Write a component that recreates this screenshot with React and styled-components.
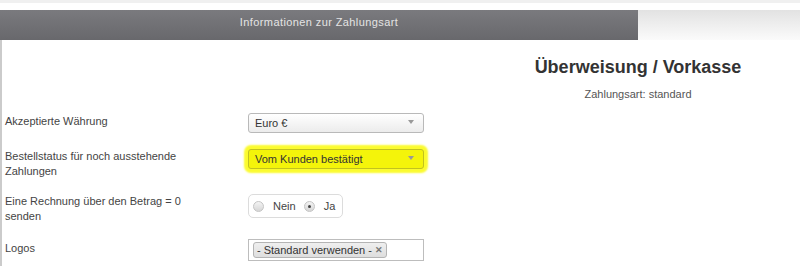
import * as React from 'react';
import styled, { createGlobalStyle, css } from 'styled-components';

const GlobalStyle = createGlobalStyle`
  html, body {
    margin: 0;
    padding: 0;
    background: #fff;
    overflow: hidden;
  }
  body {
    font-family: "Liberation Sans", Arial, sans-serif;
    font-size: 11px;
    color: #444;
  }
`;

const TopStrip = styled.div`
  height: 3px;
  background: #f0f0f0;
  margin-bottom: 7px;
`;

const Tabs = styled.div`
  display: flex;
  height: 30px;
`;

const ActiveTab = styled.div`
  width: 638px;
  display: flex;
  align-items: center;
  justify-content: center;
  background: linear-gradient(#7a7a7e, #68686c);
  color: #e4e4e4;
  font-size: 11px;
  letter-spacing: 0.4px;
  padding-bottom: 6px;
  box-sizing: border-box;
`;

const IdleTab = styled.div`
  flex: 1;
  background: linear-gradient(#e2e2e2, #fbfbfb);
`;

const Panel = styled.div`
  border-left: 2px solid #cbcbcb;
  padding-top: 16px;
  height: 226px;
  box-sizing: border-box;
`;

const Head = styled.div`
  display: grid;
  grid-template-columns: 474px 1fr;
  margin-bottom: 12px;
`;

const HeadText = styled.div`
  grid-column: 2;
  text-align: center;
`;

const Title = styled.h2`
  margin: 0 0 9px;
  font-size: 18px;
  line-height: 22px;
  font-weight: bold;
  color: #333;
`;

const Subtitle = styled.div`
  font-size: 11px;
  line-height: 14px;
  color: #555;
`;

const Row = styled.div`
  display: grid;
  grid-template-columns: 246px 1fr;
  margin-bottom: ${p => p.gap ?? 16}px;
`;

const Label = styled.div`
  padding-left: 3px;
  width: 180px;
  line-height: 15px;
  color: #444;
  padding-top: ${p => p.offset ?? 0}px;
`;

const Select = styled.div`
  position: relative;
  width: 176px;
  height: 20px;
  box-sizing: border-box;
  border: 1px solid #b9b9b9;
  border-radius: 3px;
  background: linear-gradient(#ffffff, #ececec);
  display: flex;
  align-items: center;
  padding-left: 6px;
  color: #333;

  ${p => p.marked && css`
    background: #f4f40a;
    border-color: #c2c21e;
    box-shadow: 0 0 2px 4px #fbfb2e;
  `}
`;

const Arrow = styled.span`
  position: absolute;
  right: 9px;
  top: 6px;
  width: 0;
  height: 0;
  border-left: 3px solid transparent;
  border-right: 3px solid transparent;
  border-top: 4px solid #999;
`;

const RadioGroup = styled.div`
  display: inline-flex;
  align-items: center;
  height: 24px;
  width: 95px;
  box-sizing: border-box;
  border: 1px solid #dcdcdc;
  border-radius: 5px;
  padding-left: 4px;
  color: #444;
`;

const Radio = styled.span`
  width: 9px;
  height: 9px;
  border-radius: 50%;
  border: 1px solid #c4c4c4;
  background: linear-gradient(#f4f4f4, #d6d6d6);
  display: inline-flex;
  align-items: center;
  justify-content: center;
  margin-right: ${p => p.space}px;

  ${p => p.checked && css`
    &::after {
      content: '';
      width: 3px;
      height: 3px;
      border-radius: 50%;
      background: #444;
    }
  `}
`;

const RadioText = styled.span`
  margin-right: ${p => p.space}px;
`;

const TagField = styled.div`
  width: 176px;
  height: 22px;
  box-sizing: border-box;
  border: 1px solid #bdbdbd;
  display: flex;
  align-items: center;
  padding-left: 4px;
`;

const Tag = styled.span`
  display: inline-flex;
  align-items: center;
  height: 16px;
  box-sizing: border-box;
  padding: 0 3px 0 3px;
  border: 1px solid #b4b4b4;
  border-radius: 3px;
  background: linear-gradient(#efefef, #dedede);
  color: #333;
`;

const TagClose = styled.span`
  margin-left: 3px;
  color: #777;
  font-weight: bold;
  font-size: 9px;
`;

export default function App() {
  return (
    <>
      <GlobalStyle />
      <TopStrip />
      <Tabs>
        <ActiveTab>Informationen zur Zahlungsart</ActiveTab>
        <IdleTab />
      </Tabs>
      <Panel>
        <Head>
          <HeadText>
            <Title>Überweisung / Vorkasse</Title>
            <Subtitle>Zahlungsart: standard</Subtitle>
          </HeadText>
        </Head>

        <Row>
          <Label offset={1}>Akzeptierte Währung</Label>
          <div>
            <Select>Euro €<Arrow /></Select>
          </div>
        </Row>

        <Row gap={15}>
          <Label>Bestellstatus für noch ausstehende Zahlungen</Label>
          <div>
            <Select marked>Vom Kunden bestätigt<Arrow /></Select>
          </div>
        </Row>

        <Row gap={15}>
          <Label>Eine Rechnung über den Betrag = 0 senden</Label>
          <div>
            <RadioGroup>
              <Radio space={9} />
              <RadioText space={8}>Nein</RadioText>
              <Radio checked space={9} />
              <RadioText space={0}>Ja</RadioText>
            </RadioGroup>
          </div>
        </Row>

        <Row>
          <Label offset={2}>Logos</Label>
          <div>
            <TagField>
              <Tag>- Standard verwenden -<TagClose>✕</TagClose></Tag>
            </TagField>
          </div>
        </Row>
      </Panel>
    </>
  );
}
